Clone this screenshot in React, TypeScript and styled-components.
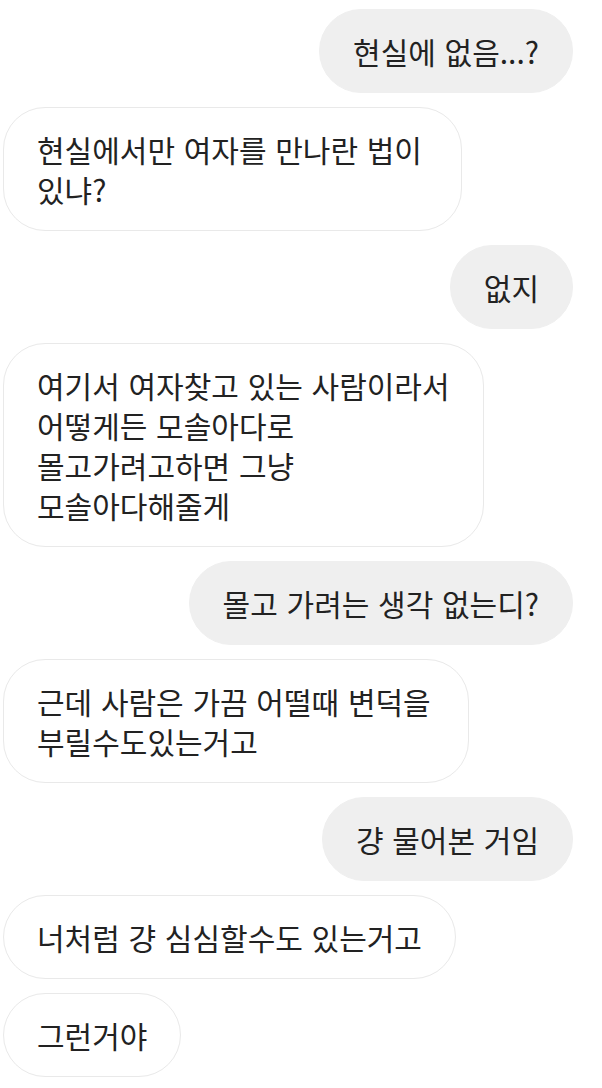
import * as React from 'react';
import styled, {createGlobalStyle} from 'styled-components';

const GlobalStyle = createGlobalStyle`
  html, body {
    margin: 0;
    padding: 0;
    background: #ffffff;
  }

  body {
    font-family: "Noto Sans CJK KR", "Noto Sans", sans-serif;
  }
`;

const SThread = styled('div')`
  display: flex;
  flex-direction: column;
  gap: 14px;

  width: 602px;
  box-sizing: border-box;
  padding: 9px 29px 10px 3px;
`;

const SRow = styled('div')<{ $mine: boolean }>`
  display: flex;
  justify-content: ${p => (p.$mine ? 'flex-end' : 'flex-start')};
`;

const SBubble = styled('div')<{ $mine: boolean; $width?: number }>`
  box-sizing: border-box;
  width: ${p => (p.$width ? `${p.$width}px` : 'fit-content')};
  padding: 21px 33px;
  border-radius: 42px;
  border: 1px solid ${p => (p.$mine ? '#efefef' : '#e9e9e9')};
  background: ${p => (p.$mine ? '#efefef' : '#ffffff')};

  font-size: 30px;
  line-height: 40px;
  word-spacing: 2px;
  color: #222222;
  white-space: pre-line;
`;

interface IMessage {
  mine: boolean;
  text: string;
  width?: number;
}

const messages: IMessage[] = [
  {mine: true, text: '현실에 없음...?'},
  {mine: false, text: '현실에서만 여자를 만나란 법이\n있냐?', width: 459},
  {mine: true, text: '없지'},
  {mine: false, text: '여기서 여자찾고 있는 사람이라서\n어떻게든 모솔아다로\n몰고가려고하면 그냥\n모솔아다해줄게'},
  {mine: true, text: '몰고 가려는 생각 없는디?'},
  {mine: false, text: '근데 사람은 가끔 어떨때 변덕을\n부릴수도있는거고', width: 466},
  {mine: true, text: '걍 물어본 거임'},
  {mine: false, text: '너처럼 걍 심심할수도 있는거고'},
  {mine: false, text: '그런거야'},
];

export default function App() {
  return (
    <>
      <GlobalStyle/>
      <SThread>
        {messages.map((m, i) => (
          <SRow key={i} $mine={m.mine}>
            <SBubble $mine={m.mine} $width={m.width}>{m.text}</SBubble>
          </SRow>
        ))}
      </SThread>
    </>
  );
}
